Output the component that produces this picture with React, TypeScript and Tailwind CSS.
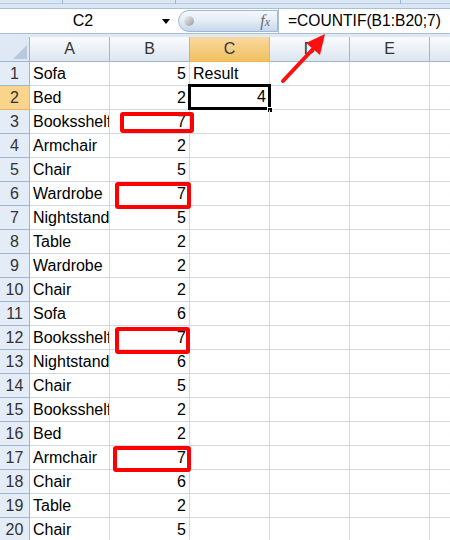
import React from "react";

const ROWS: [string, string][] = [
  ["Sofa", "5"],
  ["Bed", "2"],
  ["Booksshelf", "7"],
  ["Armchair", "2"],
  ["Chair", "5"],
  ["Wardrobe", "7"],
  ["Nightstand", "5"],
  ["Table", "2"],
  ["Wardrobe", "2"],
  ["Chair", "2"],
  ["Sofa", "6"],
  ["Booksshelf", "7"],
  ["Nightstand", "6"],
  ["Chair", "5"],
  ["Booksshelf", "2"],
  ["Bed", "2"],
  ["Armchair", "7"],
  ["Chair", "6"],
  ["Table", "2"],
  ["Chair", "5"],
];

const COLS = ["A", "B", "C", "D", "E"];

function FormulaBar() {
  return (
    <div className="flex h-[26px] border-y border-[#a9bfd6] bg-white">
      <div className="relative flex w-[178px] items-center">
        <span className="flex-1 pl-[4px] text-center text-[16px] text-black">C2</span>
        <span className="mr-[8px] h-0 w-0 border-x-[4px] border-t-[5px] border-x-transparent border-t-black" />
      </div>
      <div className="relative my-[1px] flex w-[100px] items-center rounded-l-full border border-[#a2b8d2] bg-gradient-to-b from-[#f4f8fd] via-[#e3ecf7] to-[#c7d7ec]">
        <span className="ml-[5px] h-[10px] w-[10px] rounded-full bg-gradient-to-br from-[#f4f4f4] to-[#9a9a9a]" />
        <span className="ml-auto mr-[7px] font-['Liberation_Serif',serif] text-[16px] italic text-[#6b6b6b]">
          f<span className="text-[12px]">x</span>
        </span>
      </div>
      <div className="flex flex-1 items-center border-l border-[#a9bfd6] pl-[9px] text-[15.6px] text-black">
        =COUNTIF(B1:B20;7)
      </div>
    </div>
  );
}

function HeaderRow() {
  return (
    <div className="flex h-[25px]">
      <div className="relative w-[30px] shrink-0 border-r border-b border-[#9eb6ce] bg-[#dfe8f5]">
        <svg className="absolute bottom-[2px] right-[2px]" width="14" height="14" viewBox="0 0 14 14">
          <polygon points="14,0 14,14 0,14" fill="#b8c9dd" />
        </svg>
      </div>
      {COLS.map((c) => (
        <div
          key={c}
          className={
            c === "C"
              ? "flex w-[80px] shrink-0 items-center justify-center border-r border-b border-[#f2b44c] bg-gradient-to-b from-[#f9d99f] to-[#f1c15f] text-[16px] text-[#333]"
              : "flex w-[80px] shrink-0 items-center justify-center border-r border-b border-[#9eb6ce] bg-gradient-to-b from-[#f9fcfd] to-[#dde5f0] text-[16px] text-[#333]"
          }
        >
          {c}
        </div>
      ))}
      <div className="flex-1 border-b border-[#9eb6ce] bg-gradient-to-b from-[#f9fcfd] to-[#dde5f0]" />
    </div>
  );
}

function Row({ n, name, value }: { n: number; name: string; value: string }) {
  const selected = n === 2;
  return (
    <div className="flex h-[24px]">
      <div
        className={
          selected
            ? "flex w-[30px] shrink-0 items-center justify-center border-r border-b border-[#f2b44c] bg-[#f8d48c] text-[16px] text-[#333]"
            : "flex w-[30px] shrink-0 items-center justify-center border-r border-b border-[#9eb6ce] bg-[#e4ecf7] text-[16px] text-[#333]"
        }
      >
        {n}
      </div>
      <div className="flex w-[80px] shrink-0 items-center overflow-hidden whitespace-nowrap border-r border-b border-[#d0d7e5] pl-[3px] text-[16px] text-black">
        {name}
      </div>
      <div className="flex w-[80px] shrink-0 items-center justify-end border-r border-b border-[#d0d7e5] pr-[3px] text-[16px] text-black">
        {value}
      </div>
      <div className="relative flex w-[80px] shrink-0 items-center border-r border-b border-[#d0d7e5] text-[16px] text-black">
        {n === 1 && <span className="pl-[3px]">Result</span>}
        {selected && (
          <>
            <div className="absolute -left-[2px] -top-[2px] bottom-[-1px] right-[-2px] flex items-center justify-end border-[3px] border-black pr-[2px]">
              4
            </div>
            <span className="absolute -bottom-[4px] -right-[4px] h-[6px] w-[6px] border border-white bg-black" />
          </>
        )}
      </div>
      <div className="w-[80px] shrink-0 border-r border-b border-[#d0d7e5]" />
      <div className="w-[80px] shrink-0 border-r border-b border-[#d0d7e5]" />
      <div className="flex-1 border-b border-[#d0d7e5]" />
    </div>
  );
}

export default function App() {
  return (
    <div className="relative h-[540px] w-[450px] overflow-hidden bg-white font-['Liberation_Sans',Arial,sans-serif]">
      <div className="relative h-[8px] bg-[#dbe6f4]">
        <div className="absolute inset-x-0 top-[3px] h-[1px] bg-[#b7cbe3]" />
        <div className="absolute left-[62px] top-0 h-[4px] w-[1px] bg-[#9fb7d4]" />
        <div className="absolute left-[175px] top-0 h-[4px] w-[1px] bg-[#9fb7d4]" />
        <div className="absolute left-[400px] top-0 h-[4px] w-[1px] bg-[#9fb7d4]" />
      </div>
      <FormulaBar />
      <div className="h-[3px] bg-[#dfe8f5]" />
      <HeaderRow />
      {ROWS.map(([name, value], i) => (
        <Row key={i} n={i + 1} name={name} value={value} />
      ))}

      {/* red highlight boxes over the 7s */}
      <div className="absolute left-[120px] top-[112px] h-[21px] w-[74px] rounded-[3px] border-[4px] border-[#ff0000]" />
      <div className="absolute left-[115px] top-[182px] h-[27px] w-[76px] rounded-[3px] border-[4px] border-[#ff0000]" />
      <div className="absolute left-[115px] top-[327px] h-[27px] w-[75px] rounded-[3px] border-[4px] border-[#ff0000]" />
      <div className="absolute left-[113px] top-[446px] h-[26px] w-[78px] rounded-[3px] border-[4px] border-[#ff0000]" />

      <svg className="absolute left-0 top-0" width="450" height="540" viewBox="0 0 450 540">
        <line x1="283" y1="81" x2="314" y2="48" stroke="#ff1010" strokeWidth="4" strokeLinecap="round" />
        <polygon points="325,34 320,55 306,43" fill="#ff1010" />
      </svg>
    </div>
  );
}
